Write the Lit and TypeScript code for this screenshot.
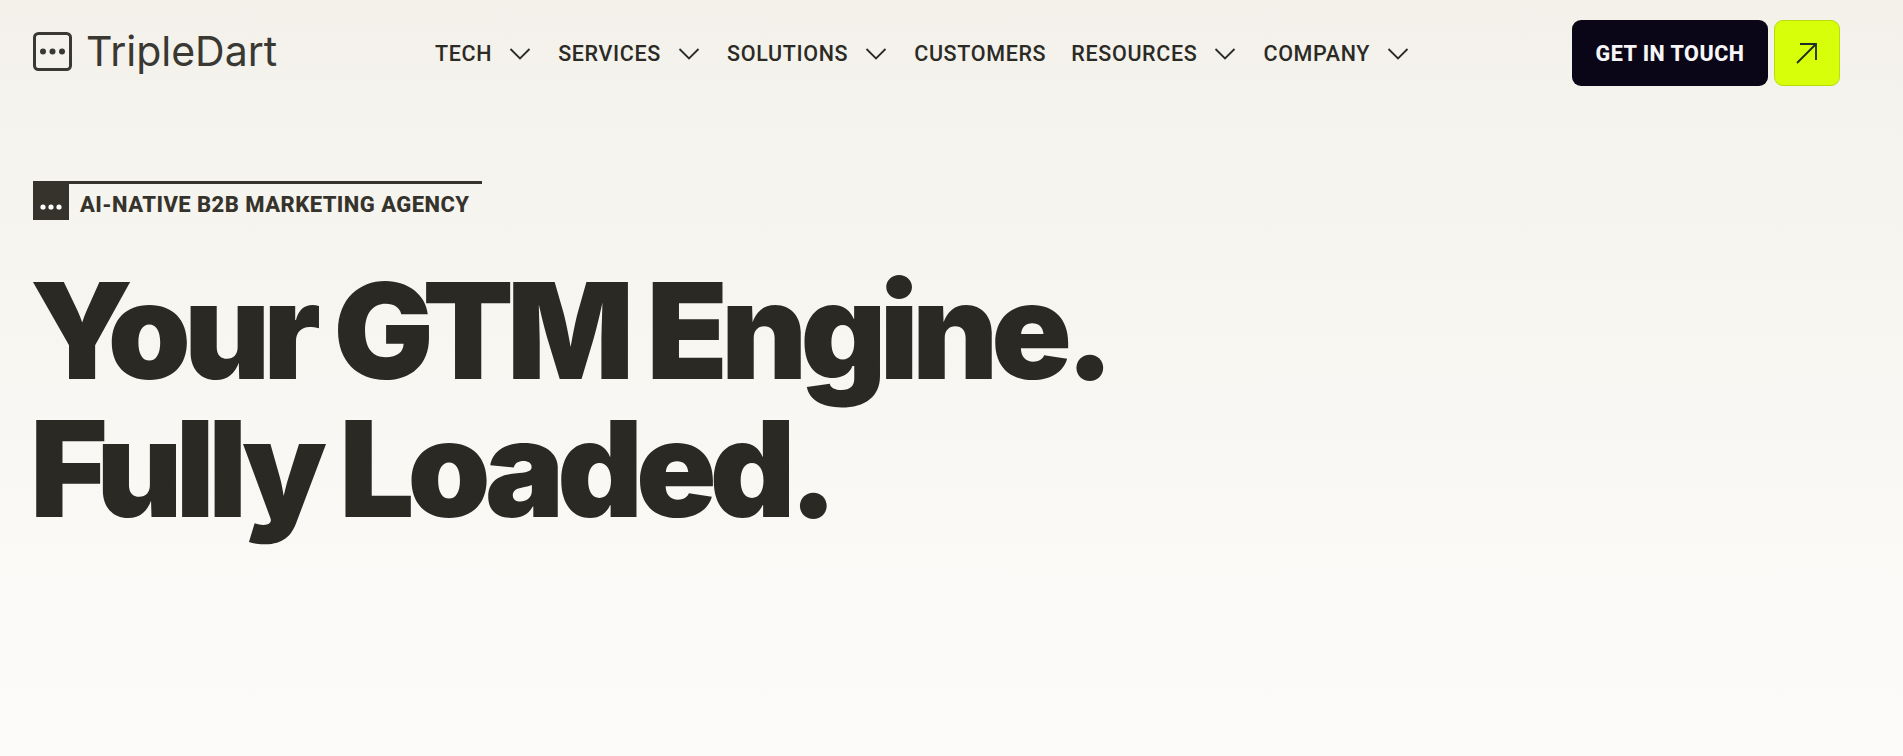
import { LitElement, html, css } from "lit";
import { customElement } from "lit/decorators.js";

const chevron = html`<svg class="chev" viewBox="0 0 22 12" width="22" height="12" fill="none" stroke="#2b2a25" stroke-width="1.8"><path d="M1.5 1 11 10.5 20.5 1"/></svg>`;

@customElement("app-root")
export class AppRoot extends LitElement {
  static styles = css`
    :host { display: block; height: 756px; overflow: hidden; color: #2b2a25;
      background: linear-gradient(180deg, #f3f1ea 0%, #f5f4ee 25%, #fbfaf8 80%, #fcfbf9 100%); }
    header { display: flex; align-items: flex-start; height: 181px; box-sizing: border-box; padding: 20px 63px 0 33px; }
    .logo { display: flex; align-items: center; gap: 14px; width: 402px; height: 62px; flex: none; }
    .logo span { font: 400 41px/1 Inter, sans-serif; letter-spacing: 0; color: #3a3833; }
    nav { display: flex; align-items: center; height: 66px; padding-top: 2px; box-sizing: border-box; flex: 1; font: 500 21.5px/1 Roboto, sans-serif; letter-spacing: 0.65px; }
    .item { display: flex; align-items: center; }
    .item.has { gap: 17px; margin-right: 27px; }
    .item.plain { margin-right: 25px; }
    .chev { display: block; }
    .cta { display: flex; gap: 6px; }
    .btn { display: flex; align-items: center; justify-content: center; width: 196px; height: 66px; padding-top: 1px; box-sizing: border-box; background: #0a0617; color: #f6f5f8; border-radius: 9px; font: 800 21.5px/1 Roboto, sans-serif; letter-spacing: 0.5px; }
    .sq { display: flex; align-items: center; justify-content: center; width: 66px; height: 66px; box-sizing: border-box; background: #d8ff0a; border: 1px solid #b8dc10; border-radius: 9px; }
    main { padding-left: 33px; }
    .eyebrow { display: flex; width: 449px; height: 39px; border-top: 3px solid #35332c; box-sizing: border-box; align-items: center; gap: 11px; }
    .mark { display: flex; align-items: flex-end; justify-content: center; width: 36px; height: 36px; background: #35332c; }
    .mark svg { display: block; margin-bottom: 10px; }
    .eyebrow b { font: 800 22px/1 Roboto, sans-serif; letter-spacing: 0.45px; color: #35332c; padding-top: 5px; }
    h1 { margin: 42px 0 0 -3px; font: 900 133px/138px Inter, sans-serif; letter-spacing: -7px; color: #2a2924; white-space: nowrap; }
  `;

  render() {
    const withChev = (t: string) => html`<div class="item has"><span>${t}</span>${chevron}</div>`;
    return html`
      <header>
        <div class="logo">
          <svg width="39" height="39" viewBox="0 0 39 39" fill="none">
            <rect x="1.5" y="1.5" width="36" height="36" rx="4" stroke="#3a3833" stroke-width="3"/>
            <circle cx="10" cy="19.5" r="3" fill="#3a3833"/><circle cx="19.5" cy="19.5" r="3" fill="#3a3833"/><circle cx="29" cy="19.5" r="3" fill="#3a3833"/>
          </svg>
          <span>TripleDart</span>
        </div>
        <nav>
          ${withChev("TECH")}${withChev("SERVICES")}${withChev("SOLUTIONS")}
          <div class="item plain"><span>CUSTOMERS</span></div>
          ${withChev("RESOURCES")}${withChev("COMPANY")}
        </nav>
        <div class="cta">
          <div class="btn">GET IN TOUCH</div>
          <div class="sq"><svg width="22" height="22" viewBox="0 0 22 22" fill="none" stroke="#1f2a2a" stroke-width="1.8"><path d="M1 21 20 2M4 2h16v16"/></svg></div>
        </div>
      </header>
      <main>
        <div class="eyebrow">
          <div class="mark"><svg width="22" height="6" viewBox="0 0 22 6" fill="#fff"><circle cx="3" cy="3" r="2.6"/><circle cx="11" cy="3" r="2.6"/><circle cx="19" cy="3" r="2.6"/></svg></div>
          <b>AI-NATIVE B2B MARKETING AGENCY</b>
        </div>
        <h1>Your GTM Engine.<br>Fully Loaded.</h1>
      </main>
    `;
  }
}
